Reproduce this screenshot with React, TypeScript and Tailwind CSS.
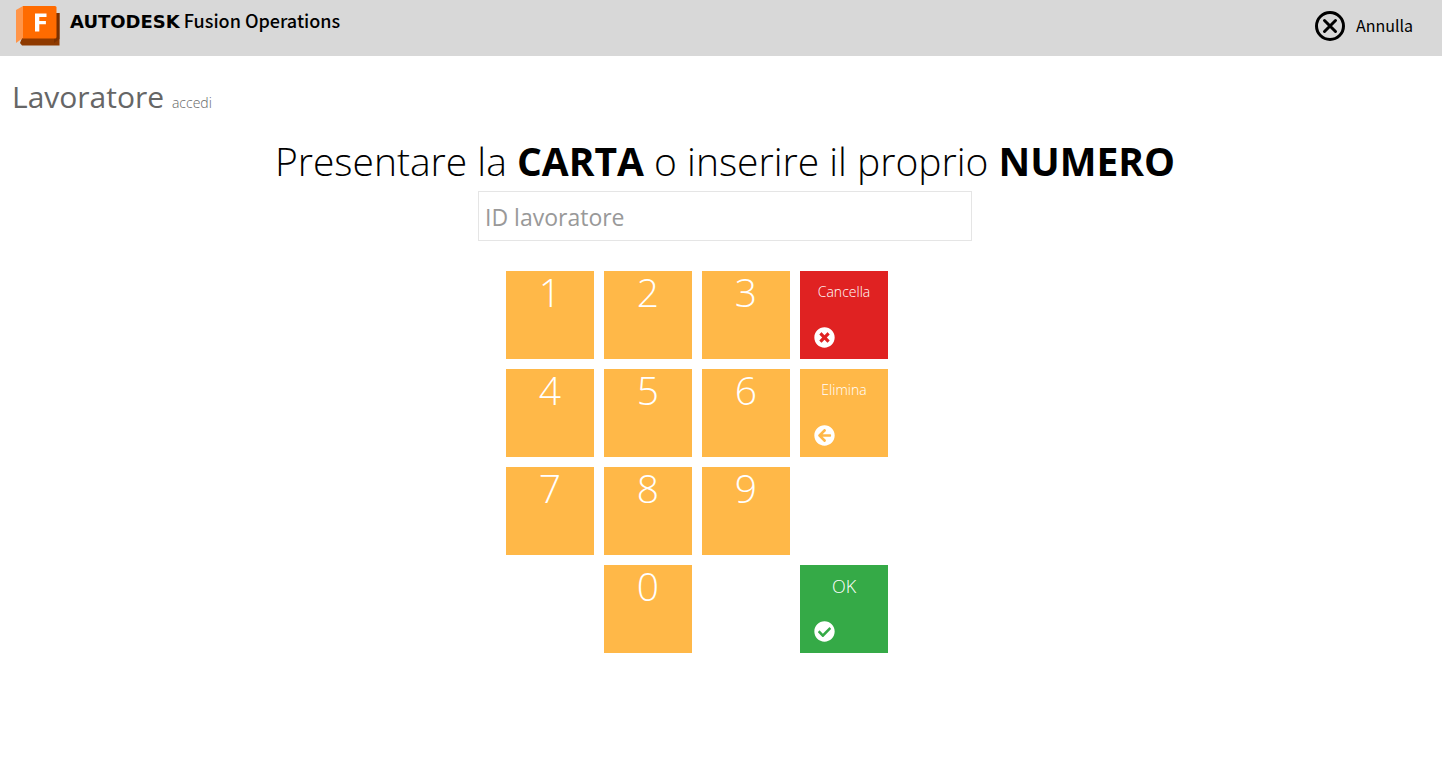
import { useState } from "react";
import { FaArrowCircleLeft, FaCheckCircle, FaTimesCircle } from "react-icons/fa";

function Logo() {
  return (
    <svg viewBox="0 0 44 40" className="h-10 w-11" aria-hidden="true">
      <path d="M38 7h5.500v32.500H6l-2-2.500 2-5z" fill="#8f3a00" />
      <path d="M38 7h5.500v26L38 37z" fill="#7a3000" />
      <path d="M0 4 7 0v32l-7 5z" fill="#ff9549" />
      <path d="M7 0h32a1.500 1.500 0 0 1 1.500 1.500V31a1.500 1.500 0 0 1-1.500 1.500H7z" fill="#ff6b00" />
      <path d="M19 7.500h11.500v3.400h-7.200v4h6.600v3.300h-6.600v7.300H19z" fill="#fff" />
    </svg>
  );
}

function Digit({ value, onPress, className = "" }: { value: string; onPress: (v: string) => void; className?: string }) {
  return (
    <button
      type="button"
      onClick={() => onPress(value)}
      className={`flex size-22 justify-center bg-[#ffb848] text-[39px] leading-[42px] font-light text-white ${className}`}
    >
      {value}
    </button>
  );
}

export default function App() {
  const [id, setId] = useState("");
  const press = (v: string) => setId(id + v);
  const action = "flex size-22 flex-col items-center justify-between py-[11px] leading-5 font-light text-white";
  const icon = "ml-3.5 size-[21px] self-start";

  return (
    <div className="min-h-screen bg-white font-['Open_Sans',sans-serif] text-black">
      <header className="flex h-14 items-start justify-between bg-[#d8d8d8] pt-1.5 pr-[29px] pl-4 font-['Noto_Sans_CJK_SC',sans-serif]">
        <div className="flex gap-2.5">
          <Logo />
          <p className="flex h-8 items-baseline gap-1 text-lg">
            <span className="font-['DejaVu_Sans',sans-serif] text-[18px] font-bold">AUTODESK</span>
            <span className="font-medium">Fusion Operations</span>
          </p>
        </div>
        <button type="button" className="flex h-10 items-center gap-2.5 text-base">
          <svg viewBox="0 0 32 32" className="size-8" fill="none" stroke="black" strokeWidth="3" aria-hidden="true">
            <circle cx="16" cy="16" r="13.500" />
            <path d="m10.500 10.500 11 11m0-11-11 11" strokeLinecap="round" />
          </svg>
          <span className="pb-0.5">Annulla</span>
        </button>
      </header>

      <main>
        <h1 className="px-3 pt-5 text-[30px] leading-[42px] text-[#666]">
          Lavoratore <small className="text-sm font-light">accedi</small>
        </h1>
        <form className="mt-5 flex flex-col items-center pl-2" onSubmit={(e) => e.preventDefault()}>
          <label htmlFor="worker" className="text-[39px] leading-[46px] font-light">
            Presentare la <b className="font-bold">CARTA</b> o inserire il proprio <b className="font-bold">NUMERO</b>
          </label>
          <div className="mt-[7px] w-full max-w-[494px]">
            <input
              id="worker"
              value={id}
              onChange={(e) => setId(e.target.value)}
              placeholder="ID lavoratore"
              className="h-[50px] w-full border border-[#e5e5e5] px-1.5 pt-0.5 text-[23px] outline-none placeholder:text-[#999]"
            />
            <div className="mt-[30px] ml-7 grid w-fit grid-cols-4 gap-2.5">
              <Digit value="1" onPress={press} />
              <Digit value="2" onPress={press} />
              <Digit value="3" onPress={press} />
              <button type="button" onClick={() => setId("")} className={`${action} bg-[#e02222] text-sm`}>
                Cancella
                <FaTimesCircle className={icon} />
              </button>
              <Digit value="4" onPress={press} />
              <Digit value="5" onPress={press} />
              <Digit value="6" onPress={press} />
              <button type="button" onClick={() => setId(id.slice(0, -1))} className={`${action} bg-[#ffb848] text-sm`}>
                Elimina
                <FaArrowCircleLeft className={icon} />
              </button>
              <Digit value="7" onPress={press} />
              <Digit value="8" onPress={press} />
              <Digit value="9" onPress={press} />
              <Digit value="0" onPress={press} className="col-start-2" />
              <button type="submit" className={`${action} col-start-4 bg-[#35aa47] text-lg`}>
                OK
                <FaCheckCircle className={icon} />
              </button>
            </div>
          </div>
        </form>
      </main>
    </div>
  );
}
